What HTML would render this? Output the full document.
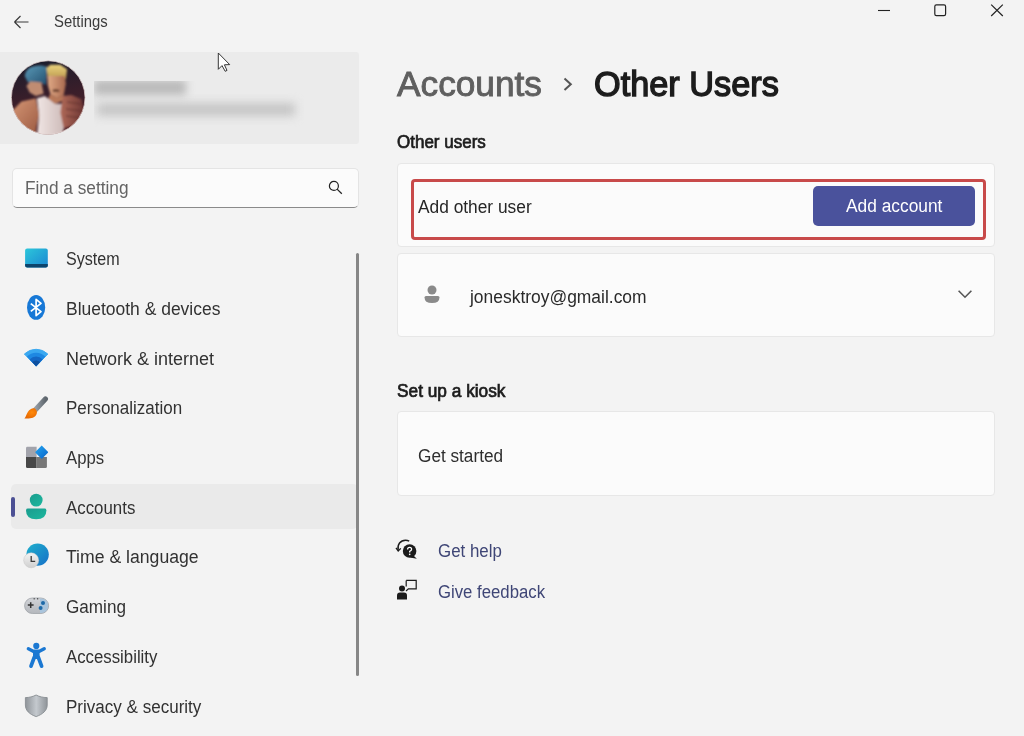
<!DOCTYPE html>
<html><head><meta charset="utf-8">
<style>
html,body{margin:0;padding:0;}
body{width:1024px;height:736px;overflow:hidden;background:#f3f3f3;position:relative;font-family:"Liberation Sans",sans-serif;color:#1b1b1b;}
.a{position:absolute;}
.t{position:absolute;white-space:nowrap;line-height:1;transform-origin:0 0;}
.card{position:absolute;background:#fbfbfb;border:1px solid #e7e7e7;border-radius:4px;box-sizing:border-box;}
</style></head><body>

<!-- title bar -->
<svg class="a" style="left:12px;top:14px" width="18" height="16" viewBox="0 0 18 16"><path d="M2.5 8H16.5M2.5 8L8.5 2M2.5 8L8.5 14" stroke="#3a3a3a" stroke-width="1.2" fill="none"/></svg>

<svg class="a" style="left:876px;top:8px" width="16" height="6"><path d="M2 2.5H14" stroke="#222" stroke-width="1.1"/></svg>
<svg class="a" style="left:932px;top:2px" width="16" height="16"><rect x="2.8" y="2.8" width="10.8" height="10.8" rx="1.6" stroke="#222" stroke-width="1.2" fill="none"/></svg>
<svg class="a" style="left:989px;top:2px" width="16" height="16"><path d="M2.2 2.6L13.8 14M13.8 2.6L2.2 14" stroke="#222" stroke-width="1.2"/></svg>

<!-- profile card -->
<div class="a" style="left:0;top:52.3px;width:358.5px;height:92.2px;background:#ebebeb;border-radius:0 3px 3px 0"></div>
<svg class="a" style="left:11px;top:60px" width="75" height="75" viewBox="0 0 75 75">
<defs><clipPath id="cc"><circle cx="37.2" cy="37.6" r="36.9"/></clipPath>
<filter id="soft" x="-5%" y="-5%" width="110%" height="110%"><feGaussianBlur stdDeviation="0.8"/></filter>
<linearGradient id="bgav" x1="0.3" y1="0" x2="0.5" y2="1"><stop offset="0" stop-color="#1a1d2c"/><stop offset="0.5" stop-color="#3a1e2a"/><stop offset="1" stop-color="#4e2228"/></linearGradient>
<linearGradient id="hairb" x1="0" y1="0" x2="1" y2="1"><stop offset="0" stop-color="#5a9ab8"/><stop offset="1" stop-color="#244f6e"/></linearGradient>
<linearGradient id="hairy" x1="0" y1="0" x2="0" y2="1"><stop offset="0" stop-color="#ecd27c"/><stop offset="1" stop-color="#b8984e"/></linearGradient>
<linearGradient id="face" x1="0" y1="0" x2="1" y2="0"><stop offset="0" stop-color="#e0aa86"/><stop offset="1" stop-color="#a8684e"/></linearGradient>
<linearGradient id="skin" x1="0" y1="0" x2="1" y2="1"><stop offset="0" stop-color="#d89a78"/><stop offset="1" stop-color="#9a5840"/></linearGradient>
<linearGradient id="tank" x1="0" y1="0" x2="1" y2="0"><stop offset="0" stop-color="#f0e6e4"/><stop offset="1" stop-color="#c8b4b2"/></linearGradient>
<linearGradient id="arm" x1="0" y1="0" x2="1" y2="0"><stop offset="0" stop-color="#b06a58"/><stop offset="1" stop-color="#6e3634"/></linearGradient></defs>
<g clip-path="url(#cc)">
<rect width="75" height="75" fill="url(#bgav)"/>
<g filter="url(#soft)">
<path d="M13.7 15.9 C15 10 18 7.6 22 6.5 C27 5 32 5 36 7 L35.4 24.9 L27 22.6 L17 22.6 Z" fill="url(#hairb)"/>
<path d="M15.4 26 L19.3 21.5 L30.4 22.6 L32.6 33.8 L24.8 36 L18.7 32.6 L17 29Z" fill="#c08c72"/>
<path d="M35.4 8.1 L39.3 4.8 L49.4 4.8 L56 9.3 L54.9 19.3 L37.1 19.3 Z" fill="url(#hairy)"/>
<path d="M36.6 15.9 L53.8 15.9 L54.9 23.7 L52.7 34.9 L46 38.2 L39.3 33.8 L37.1 26 Z" fill="url(#face)"/>
<path d="M41.6 29.8 Q45 28.4 48.4 30 L48 32 Q45 31 42 32Z" fill="#5a3024"/>
<path d="M39.3 33.8 L46 38.2 L52.7 34.9 L53 40 L44 44 L37 39Z" fill="#b87858"/>
<path d="M-2 52 L2.6 49.4 L10.4 41.6 L24.9 38.2 L28.2 54.9 L24.9 69.4 L25 76 L-2 76Z" fill="url(#skin)"/>
<path d="M26 38.2 L33.8 36 L43.8 43.8 L52.7 43.8 L57.2 54.9 L50.5 76 L26 76 L28.2 54.9 Z" fill="url(#tank)"/>
<path d="M51.6 36 L60.5 34.9 L70.5 39.3 L72.8 50.5 L68.3 63.8 L52.7 68.3 L49.4 52.7 Z" fill="url(#arm)"/>
<path d="M56 42 L70 44 M55 49 L71 51 M55 56 L70 58" stroke="#5a2c2a" stroke-width="1.1" opacity="0.8"/>
</g></g>
<circle cx="37.2" cy="37.6" r="36.8" fill="none" stroke="#e6d6d2" stroke-width="0.7"/>
</svg>
<div class="a" style="left:94px;top:81px;width:210px;height:46px;overflow:hidden">
 <div class="a" style="left:0px;top:-1px;width:92px;height:15px;background:#b9b9b9;filter:blur(4.5px)"></div>
 <div class="a" style="left:3px;top:22px;width:198px;height:13px;background:#c5c5c5;filter:blur(5px)"></div>
</div>
<!-- cursor -->
<svg class="a" style="left:216px;top:51px" width="18" height="23" viewBox="0 0 18 23"><path d="M2.3 2 L2.3 18.3 L6 14.6 L9.2 20.3 L11 19.4 L8.4 13.8 L13.7 13.6 Z" fill="#fff" stroke="#2a2a2a" stroke-width="0.95" stroke-linejoin="round"/></svg>

<!-- search -->
<div class="a" style="left:12px;top:167.5px;width:346.5px;height:40px;background:#fbfbfb;border:1px solid #e4e4e4;border-bottom:1px solid #8a8a8a;border-radius:5px;box-sizing:border-box"></div>
<svg class="a" style="left:326px;top:179px" width="18" height="18"><circle cx="7.9" cy="6.9" r="4.5" stroke="#222" stroke-width="1.2" fill="none"/><path d="M11.1 10.1L15.8 14.8" stroke="#222" stroke-width="1.3"/></svg>

<!-- nav -->
<div class="a" style="left:11px;top:484px;width:347px;height:45px;background:#eaeaea;border-radius:5px"></div>
<div class="a" style="left:11px;top:497px;width:4px;height:20px;background:#4c5094;border-radius:2px"></div>
<div class="a" style="left:356px;top:253px;width:3px;height:423px;background:#868686;border-radius:1.5px"></div>


<!-- nav icons -->
<svg class="a" style="left:18px;top:240px" width="36" height="36" viewBox="0 0 36 36">
<defs><linearGradient id="gsys" x1="0" y1="0" x2="1" y2="1"><stop offset="0" stop-color="#2cc6da"/><stop offset="1" stop-color="#1a86d2"/></linearGradient></defs>
<rect x="7.1" y="8.6" width="22.7" height="18.8" rx="2" fill="url(#gsys)"/>
<path d="M7.1 24 H29.8 V25.4 Q29.8 27.4 27.8 27.4 H9.1 Q7.1 27.4 7.1 25.4Z" fill="#0c446c"/>
</svg>
<svg class="a" style="left:18px;top:290px" width="36" height="36" viewBox="0 0 36 36">
<ellipse cx="18.1" cy="17.4" rx="9.1" ry="12.35" fill="#1778d6"/>
<path d="M12.8 13.6 L23 21.6 L18.1 25.6 L18.1 9.4 L23 13.4 L12.8 21.4" stroke="#fff" stroke-width="1.7" fill="none" stroke-linejoin="round"/>
</svg>
<svg class="a" style="left:18px;top:340px" width="36" height="36" viewBox="0 0 36 36">
<path d="M18.1 26.2 L6.4 14 A16.9 16.9 0 0 1 29.8 14 Z" fill="#3aa8f0" stroke="#3aa8f0" stroke-width="1" stroke-linejoin="round"/>
<path d="M18.1 26.2 L8.9 16.6 A12.8 12.8 0 0 1 27.3 16.6 Z" fill="#1e88e2"/>
<path d="M18.1 26.2 L11.6 19.4 A9 9 0 0 1 24.6 19.4 Z" fill="#1467c4"/>
<path d="M18.1 26.2 L14.2 22.1 A5.4 5.4 0 0 1 22 22.1 Z" fill="#0e4f9e"/>
</svg>
<svg class="a" style="left:18px;top:390px" width="36" height="36" viewBox="0 0 36 36">
<defs><linearGradient id="gbr" x1="0" y1="0" x2="1" y2="0"><stop offset="0" stop-color="#9aa2aa"/><stop offset="1" stop-color="#5f676e"/></linearGradient>
<radialGradient id="gor" cx="0.6" cy="0.4" r="0.7"><stop offset="0" stop-color="#ff8a0a"/><stop offset="1" stop-color="#e46400"/></radialGradient></defs>
<path d="M27.4 8.9 L16.8 20.4" stroke="url(#gbr)" stroke-width="5.2" stroke-linecap="round"/>
<path d="M16.8 18.6 C19.5 20.5 19.6 24 17.2 26.2 C14.5 28.6 10 28.6 6.4 28.6 C8 27.4 8.2 24.2 10 21.8 C11.8 19.4 14.6 17.6 16.8 18.6Z" fill="url(#gor)"/>
</svg>
<svg class="a" style="left:18px;top:439px" width="36" height="36" viewBox="0 0 36 36">
<defs><linearGradient id="gapp" x1="0" y1="0" x2="1" y2="1"><stop offset="0" stop-color="#22a6f2"/><stop offset="1" stop-color="#0a64c8"/></linearGradient></defs>
<path d="M9.4 7.8 H18.6 V18 H8 V9.2 Q8 7.8 9.4 7.8Z" fill="#a2a3ab"/>
<path d="M8 18 H18.6 V29.1 H9.4 Q8 29.1 8 27.7Z" fill="#474747"/>
<path d="M18.6 18 H28.9 V27.7 Q28.9 29.1 27.5 29.1 H18.6Z" fill="#777777"/>
<path d="M23.7 6.6 L29.9 12.8 Q30.4 13.3 29.9 13.8 L24.2 19.5 Q23.7 20 23.2 19.5 L17.5 13.8 Q17 13.3 17.5 12.8 Z" fill="url(#gapp)"/>
</svg>
<svg class="a" style="left:18px;top:489px" width="36" height="36" viewBox="0 0 36 36">
<defs><linearGradient id="gacc" x1="0" y1="0" x2="1" y2="1"><stop offset="0" stop-color="#1a9c8e"/><stop offset="1" stop-color="#1bb89e"/></linearGradient></defs>
<circle cx="18.2" cy="11.1" r="6.4" fill="url(#gacc)"/>
<path d="M9.8 19.6 H26.6 Q28.4 19.6 28.4 21.4 Q28.4 30.2 18.2 30.2 Q8 30.2 8 21.4 Q8 19.6 9.8 19.6Z" fill="url(#gacc)"/>
</svg>
<svg class="a" style="left:18px;top:538px" width="36" height="36" viewBox="0 0 36 36">
<defs><linearGradient id="gglb" x1="0" y1="0" x2="1" y2="1"><stop offset="0" stop-color="#1fb0cc"/><stop offset="1" stop-color="#1670c8"/></linearGradient>
<linearGradient id="gclk" x1="0" y1="0" x2="0" y2="1"><stop offset="0" stop-color="#f4f4f4"/><stop offset="1" stop-color="#cfcfcf"/></linearGradient></defs>
<circle cx="19.6" cy="16.6" r="11.2" fill="url(#gglb)"/>
<circle cx="13.2" cy="22.3" r="7.5" fill="url(#gclk)" stroke="#c4c4c4" stroke-width="0.5"/>
<path d="M13.2 18 V23.4 H17.2" stroke="#3a3a3a" stroke-width="1.3" fill="none"/>
</svg>
<svg class="a" style="left:18px;top:588px" width="36" height="36" viewBox="0 0 36 36">
<defs><linearGradient id="gpad" x1="0" y1="0" x2="0" y2="1"><stop offset="0" stop-color="#d2d4d8"/><stop offset="1" stop-color="#b4b7bc"/></linearGradient></defs>
<rect x="6.6" y="10" width="24" height="15.5" rx="7.75" fill="url(#gpad)" stroke="#9fa3a8" stroke-width="0.8"/>
<path d="M22 10.5 H23 A7.2 7.2 0 0 1 23 25 H22Z" fill="#a9c4dc"/>
<path d="M9.8 17.1 H15.6 M12.7 14.2 V20" stroke="#333" stroke-width="1.5"/>
<circle cx="25" cy="14.9" r="2" fill="#1e6aa8"/>
<circle cx="22.6" cy="20" r="2" fill="#1e6aa8"/>
<rect x="15.6" y="10.2" width="1.2" height="1.2" fill="#444"/><rect x="19" y="10.2" width="1.2" height="1.2" fill="#444"/>
</svg>
<svg class="a" style="left:18px;top:638px" width="36" height="36" viewBox="0 0 36 36">
<circle cx="18.3" cy="7.9" r="3.1" fill="#1b78d2"/>
<path d="M10.4 10.8 L15.2 13.2 H21.4 L26.2 10.8" stroke="#1b78d2" stroke-width="3.5" stroke-linecap="round" stroke-linejoin="round" fill="none"/>
<rect x="15" y="12" width="6.6" height="9" fill="#1b78d2"/>
<path d="M16.2 19.5 L13 28.2 M20.4 19.5 L23.6 28.2" stroke="#1b78d2" stroke-width="3.7" stroke-linecap="round"/>
</svg>
<svg class="a" style="left:18px;top:687px" width="36" height="36" viewBox="0 0 36 36">
<defs><linearGradient id="gsh" x1="0" y1="0" x2="1" y2="0"><stop offset="0" stop-color="#8f9499"/><stop offset="0.5" stop-color="#c4c9ce"/><stop offset="1" stop-color="#8f9499"/></linearGradient></defs>
<path d="M18.1 8 C15 9.6 11.3 10.6 7.4 10.6 V18 C7.4 23.4 11.3 27.2 18.1 29.6 C24.9 27.2 29.2 23.4 29.2 18 V10.6 C24.9 10.6 21.2 9.6 18.1 8Z" fill="url(#gsh)" stroke="#888d92" stroke-width="0.9"/>
</svg>



<!-- main -->
<svg class="a" style="left:561px;top:76px" width="14" height="16"><path d="M3.5 2.5L9.8 8.2L3.5 14" stroke="#555" stroke-width="2" fill="none"/></svg>


<div class="card" style="left:397px;top:162.5px;width:598px;height:84px"></div>
<div class="a" style="left:411px;top:179px;width:575px;height:61px;border:3px solid #c84a4a;border-radius:4px;box-sizing:border-box"></div>
<div class="a" style="left:813px;top:186px;width:162px;height:40px;background:#4a529c;border-radius:5px"></div>

<div class="card" style="left:397px;top:253px;width:598px;height:84px"></div>
<svg class="a" style="left:422px;top:283px" width="20" height="22"><circle cx="10" cy="7" r="4.5" fill="#8a8a8a"/><path d="M2.5 14.5 Q2.5 13 4 13 H16 Q17.5 13 17.5 14.5 Q17.5 20 10 20 Q2.5 20 2.5 14.5Z" fill="#8a8a8a"/></svg>
<svg class="a" style="left:956px;top:287px" width="18" height="14"><path d="M2.6 3.8L9 10.2L15.4 3.8" stroke="#555" stroke-width="1.6" fill="none"/></svg>

<div class="card" style="left:397px;top:411px;width:598px;height:85px"></div>

<svg class="a" style="left:395px;top:537px" width="24" height="24"><path d="M3.2 13 C2 7.5 5.5 3.2 10.5 3.2 C12 3.2 13.2 3.6 14.2 4.2" stroke="#1b1b1b" stroke-width="1.4" fill="none"/><path d="M1 10.8 L3.2 14 L5.8 11.4" stroke="#1b1b1b" stroke-width="1.3" fill="none"/><circle cx="14.6" cy="14" r="6.8" fill="#1b1b1b"/><path d="M18.5 18.5 L21.8 21.8 L15 20.6Z" fill="#1b1b1b"/><path d="M12.6 12.4 Q12.6 10.3 14.6 10.3 Q16.6 10.3 16.6 12.2 Q16.6 13.4 14.7 14.3 V15.4" stroke="#fff" stroke-width="1.3" fill="none"/><circle cx="14.7" cy="17.4" r="0.8" fill="#fff"/></svg>
<svg class="a" style="left:395px;top:578px" width="24" height="24"><path d="M11.2 2.4 H21.2 V10.8 H13.4 L11 13" stroke="#1b1b1b" stroke-width="1.2" fill="none"/><path d="M11.2 2.4 V8.5" stroke="#1b1b1b" stroke-width="1.2"/><circle cx="7" cy="10.4" r="3" fill="#1b1b1b"/><path d="M2 21.4 V17.6 Q2 14.4 5 14.4 H9 Q12 14.4 12 17.6 V21.4Z" fill="#1b1b1b"/></svg>

<div class="t" style="left:54.20px;top:13.39px;font-size:16.2px;font-weight:400;color:#3b3b3b;transform:scaleX(0.9179)">Settings</div>
<div class="t" style="left:25.22px;top:179.50px;font-size:17.6px;font-weight:400;color:#646464;transform:scaleX(0.9804)">Find a setting</div>
<div class="t" style="left:66.20px;top:251.20px;font-size:17.6px;font-weight:400;color:#323232;transform:scaleX(0.9155)">System</div>
<div class="t" style="left:65.61px;top:300.90px;font-size:17.6px;font-weight:400;color:#323232;transform:scaleX(0.9928)">Bluetooth &amp; devices</div>
<div class="t" style="left:65.58px;top:350.60px;font-size:17.6px;font-weight:400;color:#323232;transform:scaleX(1.0234)">Network &amp; internet</div>
<div class="t" style="left:65.63px;top:400.30px;font-size:17.6px;font-weight:400;color:#323232;transform:scaleX(0.9653)">Personalization</div>
<div class="t" style="left:66.20px;top:450.00px;font-size:17.6px;font-weight:400;color:#323232;transform:scaleX(0.9503)">Apps</div>
<div class="t" style="left:66.20px;top:499.70px;font-size:17.6px;font-weight:400;color:#323232;transform:scaleX(0.9577)">Accounts</div>
<div class="t" style="left:65.60px;top:549.40px;font-size:17.6px;font-weight:400;color:#323232;transform:scaleX(1.0017)">Time &amp; language</div>
<div class="t" style="left:66.20px;top:599.10px;font-size:17.6px;font-weight:400;color:#323232;transform:scaleX(0.9734)">Gaming</div>
<div class="t" style="left:66.20px;top:648.80px;font-size:17.6px;font-weight:400;color:#323232;transform:scaleX(0.9540)">Accessibility</div>
<div class="t" style="left:65.63px;top:698.50px;font-size:17.6px;font-weight:400;color:#323232;transform:scaleX(0.9683)">Privacy &amp; security</div>
<div class="t" style="left:396.65px;top:67.31px;font-size:34.6px;font-weight:400;color:#5f5f5f;transform:scaleX(1.0194);-webkit-text-stroke:0.9px #5f5f5f">Accounts</div>
<div class="t" style="left:593.71px;top:67.31px;font-size:34.6px;font-weight:400;color:#1c1c1c;transform:scaleX(0.9919);-webkit-text-stroke:1.4px #1c1c1c">Other Users</div>
<div class="t" style="left:397.45px;top:134.10px;font-size:17.6px;font-weight:400;color:#1c1c1c;transform:scaleX(0.9662);-webkit-text-stroke:0.7px #1c1c1c">Other users</div>
<div class="t" style="left:418.20px;top:199.30px;font-size:17.6px;font-weight:400;color:#262626;transform:scaleX(0.9849)">Add other user</div>
<div class="t" style="left:845.50px;top:198.20px;font-size:17.6px;font-weight:400;color:#ffffff;transform:scaleX(0.9854)">Add account</div>
<div class="t" style="left:469.79px;top:288.90px;font-size:17.6px;font-weight:400;color:#2a2a2a;transform:scaleX(0.9907)">jonesktroy@gmail.com</div>
<div class="t" style="left:397.35px;top:382.80px;font-size:17.6px;font-weight:400;color:#1c1c1c;transform:scaleX(0.9818);-webkit-text-stroke:0.7px #1c1c1c">Set up a kiosk</div>
<div class="t" style="left:417.90px;top:447.70px;font-size:17.6px;font-weight:400;color:#2e2e2e;transform:scaleX(0.9774)">Get started</div>
<div class="t" style="left:438.00px;top:543.20px;font-size:17.6px;font-weight:400;color:#3f4676;transform:scaleX(0.9592)">Get help</div>
<div class="t" style="left:438.00px;top:584.00px;font-size:17.6px;font-weight:400;color:#3f4676;transform:scaleX(0.9514)">Give feedback</div>
</body></html>
